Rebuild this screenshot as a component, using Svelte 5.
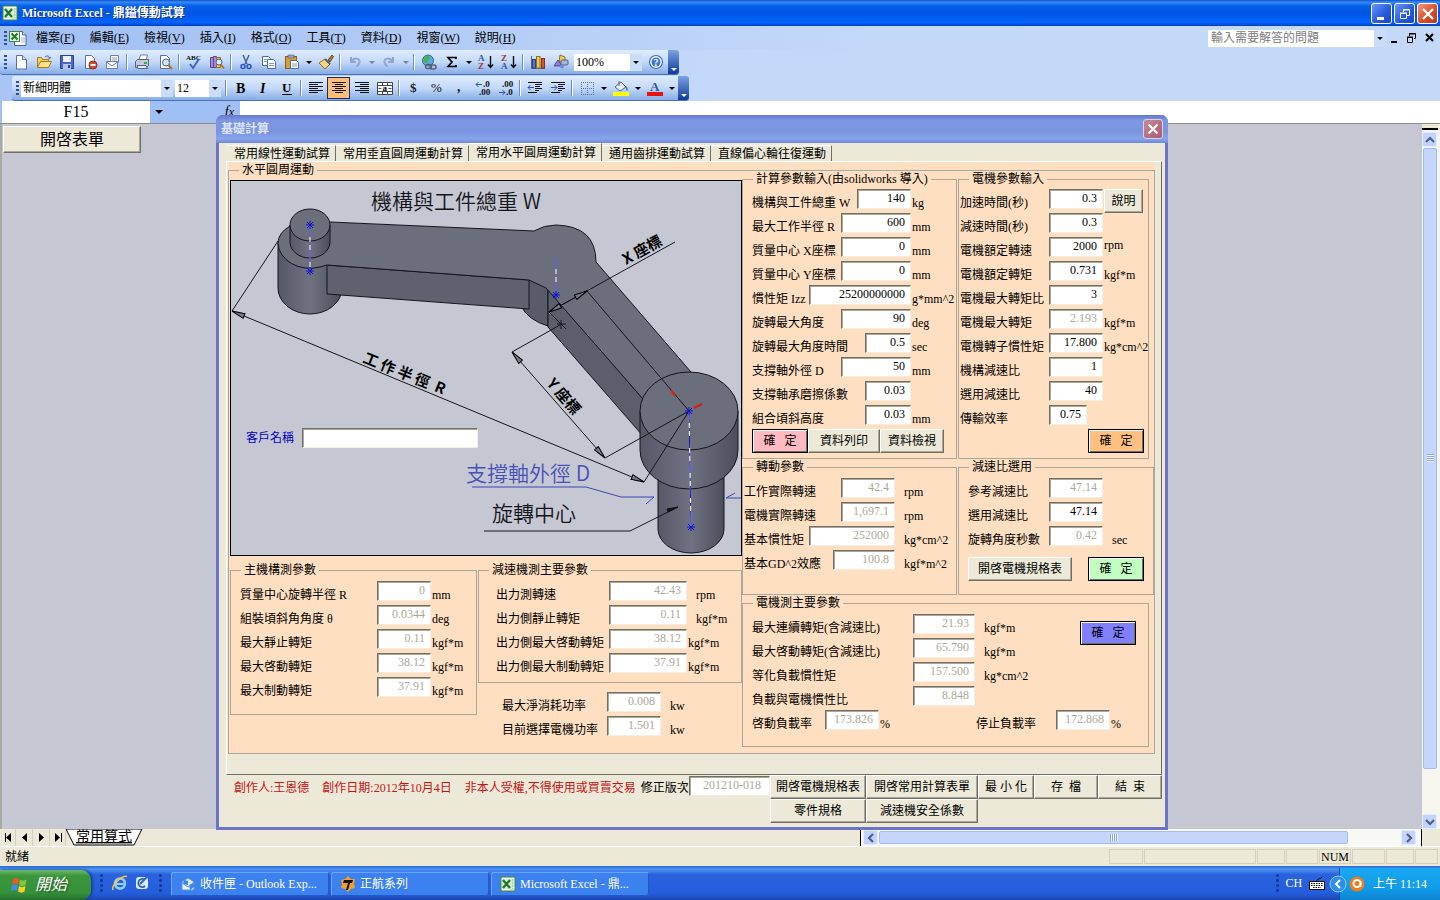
<script>
  const menus = [
    ['檔案', 'F'], ['編輯', 'E'], ['檢視', 'V'], ['插入', 'I'], ['格式', 'O'],
    ['工具', 'T'], ['資料', 'D'], ['視窗', 'W'], ['說明', 'H']
  ];
  const standardBar = [
    'new', 'open', 'save', 'perm', 'mail', '|', 'print', 'preview', '|', 'spell', 'research', '|',
    'cut', 'copy', 'paste', 'v', 'brush', '|', 'undo', 'v-', 'redo', 'v-', '|', 'link', 'sum', 'v',
    'az', 'za', '|', 'chart', 'draw'
  ];
  const formatBar = [
    '|', 'bold', 'italic', 'under', '|', 'left', 'center', 'right', 'merge', '|', 'dollar', 'percent',
    'comma', 'inc', 'dec', '|', 'outdent', 'indent', '|', 'border', 'v', 'fill', 'v', 'font', 'v'
  ];
  const tabs = ['常用線性運動試算', '常用垂直圓周運動計算', '常用水平圓周運動計算', '通用齒排運動試算', '直線偏心輪往復運動'];
  const load = [
    { l: '機構與工件總重 W', v: '140', w: 54, u: 'kg' },
    { l: '最大工作半徑 R', v: '600', w: 70, u: 'mm' },
    { l: '質量中心 X座標', v: '0', w: 70, u: 'mm' },
    { l: '質量中心 Y座標', v: '0', w: 70, u: 'mm' },
    { l: '慣性矩 Izz', v: '25200000000', w: 102, u: 'g*mm^2' },
    { l: '旋轉最大角度', v: '90', w: 70, u: 'deg' },
    { l: '旋轉最大角度時間', v: '0.5', w: 46, u: 'sec' },
    { l: '支撐軸外徑 D', v: '50', w: 70, u: 'mm' },
    { l: '支撐軸承磨擦係數', v: '0.03', w: 46, u: '' },
    { l: '組合頃斜高度', v: '0.03', w: 46, u: 'mm' }
  ];
  const motor = [
    { l: '加速時間(秒)', v: '0.3', w: 54, help: true },
    { l: '減速時間(秒)', v: '0.3', w: 54, u: '' },
    { l: '電機額定轉速', v: '2000', w: 54, u: 'rpm', high: true },
    { l: '電機額定轉矩', v: '0.731', w: 54, u: 'kgf*m' },
    { l: '電機最大轉矩比', v: '3', w: 54, u: '' },
    { l: '電機最大轉矩', v: '2.193', w: 54, u: 'kgf*m', off: true },
    { l: '電機轉子慣性矩', v: '17.800', w: 54, u: 'kg*cm^2' },
    { l: '機構減速比', v: '1', w: 54, u: '' },
    { l: '選用減速比', v: '40', w: 54, u: '' },
    { l: '傳輸效率', v: '0.75', w: 38, u: '' }
  ];
  const turning = [
    { l: '工作實際轉速', v: '42.4', w: 54, u: 'rpm', off: true },
    { l: '電機實際轉速', v: '1,697.1', w: 54, u: 'rpm', off: true },
    { l: '基本慣性矩', v: '252000', w: 86, u: 'kg*cm^2', off: true },
    { l: '基本GD^2效應', v: '100.8', w: 62, u: 'kgf*m^2', off: true }
  ];
  const ratio = [
    { l: '參考減速比', v: '47.14', w: 54, u: '', off: true },
    { l: '選用減速比', v: '47.14', w: 54, u: '' },
    { l: '旋轉角度秒數', v: '0.42', w: 54, u: 'sec', off: true }
  ];
  const motorOut = [
    { l: '最大連續轉矩(含減速比)', v: '21.93', w: 62, u: 'kgf*m', off: true },
    { l: '最大啓動轉矩(含減速比)', v: '65.790', w: 62, u: 'kgf*m', off: true },
    { l: '等化負載慣性矩', v: '157.500', w: 62, u: 'kg*cm^2', off: true },
    { l: '負載與電機慣性比', v: '8.848', w: 62, u: '', off: true }
  ];
  const body = [
    { l: '質量中心旋轉半徑 R', v: '0', w: 54, u: 'mm', off: true },
    { l: '組裝頃斜角角度 θ', v: '0.0344', w: 54, u: 'deg', off: true },
    { l: '最大靜止轉矩', v: '0.11', w: 54, u: 'kgf*m', off: true },
    { l: '最大啓動轉矩', v: '38.12', w: 54, u: 'kgf*m', off: true },
    { l: '最大制動轉矩', v: '37.91', w: 54, u: 'kgf*m', off: true }
  ];
  const reducer = [
    { l: '出力測轉速', v: '42.43', w: 78, u: 'rpm', off: true, wide: true },
    { l: '出力側靜止轉矩', v: '0.11', w: 78, u: 'kgf*m', off: true, wide: true },
    { l: '出力側最大啓動轉矩', v: '38.12', w: 78, u: 'kgf*m', off: true },
    { l: '出力側最大制動轉矩', v: '37.91', w: 78, u: 'kgf*m', off: true }
  ];
  const power = [
    { l: '最大淨消耗功率', v: '0.008', w: 54, u: 'kw', off: true },
    { l: '目前選擇電機功率', v: '1.501', w: 54, u: 'kw', off: true }
  ];
  const stars = [[310, 225], [310, 271], [556, 295], [689, 411], [691, 527]];
  const dims = ['M232 311L644 482', 'M512 352L605 458', 'M549 312L587 291'];
  const cells = [34, 112, 28, 32];
  const cellsEnd = [33, 28, 23];
</script>

{#snippet rows(list, key)}
  {#each list as r, i}
    <div class="row">
      <label for="{key}{i}">{r.l}</label>
      <input id="{key}{i}" class:off={r.off} readonly={r.off} value={r.v} style="width:{r.w}px" />
      {#if r.help}
        <span class="unit"><button class="btn help">說明</button></span>
      {:else}
        <span class="unit" class:high={r.high} class:wide={r.wide}>{r.u}</span>
      {/if}
    </div>
  {/each}
{/snippet}

{#snippet excel(size)}
  <svg width={size} height={size} viewBox="0 0 16 16" aria-hidden="true">
    <rect x="1" y="1" width="14" height="14" fill="#f4faf0" stroke="#3c8a3c" />
    <path d="M10 4h4M10 7h4M10 10h4M10 13h4M12 3v10" stroke="#9cc99c" />
    <rect x="2" y="3" width="10" height="10" fill="#dcefd6" />
    <path d="M3 4l7 8M10 4l-7 8" stroke="#1f7a2d" stroke-width="2.4" />
  </svg>
{/snippet}

{#snippet icon(n)}
  <svg width="16" height="16" viewBox="0 0 16 16" fill="none" aria-hidden="true">
    {#if n === 'new'}
      <path d="M3.5 1.5h6l4 4v9.500h-10z" fill="#fff" stroke="#5a6f9c" /><path d="M9.500 1.500v4h4" fill="#d5e0f5" stroke="#5a6f9c" />
    {:else if n === 'open'}
      <path d="M1.500 13.500v-10h4l1 2h6v2" fill="#f5cf62" stroke="#a87a1c" /><path d="M1.500 13.500l3-6h11l-3 6z" fill="#ffe38a" stroke="#a87a1c" /><path d="M9 3c2-2 4-1 4.500 1m-1.500-.5l1.500 1.500 1.500-2" stroke="#3d62b5" />
    {:else if n === 'save'}
      <path d="M1.500 1.500h13v13h-13z" fill="#4a68c8" stroke="#28409a" /><rect x="4" y="2" width="8" height="6" fill="#eef3ff" /><rect x="4" y="10" width="8" height="5" fill="#b7c2dc" /><rect x="9" y="11" width="2" height="3" fill="#28409a" />
    {:else if n === 'perm'}
      <path d="M3.500 1.500h6l3 3v10h-9z" fill="#fff" stroke="#5a6f9c" /><circle cx="11" cy="11" r="4" fill="#d8472f" stroke="#9c2a18" /><rect x="8.500" y="10" width="5" height="2" fill="#fff" />
    {:else if n === 'mail'}
      <path d="M5.500 1.500h8v7h-8z" fill="#fff" stroke="#6f7fa0" /><path d="M7 4h5M7 6h5" stroke="#8b98b4" /><path d="M1.500 7.500h11v7h-11z" fill="#f6f8ff" stroke="#6f7fa0" /><path d="M1.500 8l5.500 4 5.500-4" stroke="#6f7fa0" />
    {:else if n === 'print'}
      <path d="M5 6l1.500-5h7L12 6z" fill="#fff" stroke="#6f7fa0" /><path d="M1.500 7.500l2-2h11v6l-2 2h-11z" fill="#c3cbd9" stroke="#56627c" /><path d="M3 11.500h9l1.500 3H4z" fill="#e8edf5" stroke="#56627c" /><rect x="10" y="8" width="3" height="2" fill="#3aa845" />
    {:else if n === 'preview'}
      <path d="M3.500 1.500h6l3 3v10h-9z" fill="#fff" stroke="#5a6f9c" /><circle cx="9" cy="8.500" r="3.500" fill="#cfe6f7" stroke="#56627c" /><path d="M11.500 11l3.500 4" stroke="#b5782a" stroke-width="2" />
    {:else if n === 'spell'}
      <text x="0" y="6" font-size="7" font-weight="700" fill="#111">ABC</text><path d="M4 10l3 4 6-9" stroke="#3c68c8" stroke-width="2" />
    {:else if n === 'research'}
      <path d="M1.500 3.500h3v10h-3zM4.500 2.500h3v11h-3z" fill="#a88ad8" stroke="#5c4499" /><path d="M7.500 3.500h4v10h-4z" fill="#f1c659" stroke="#94701d" /><circle cx="10" cy="8" r="3" fill="#d9edf8" stroke="#56627c" /><path d="M12 10.500l3 4" stroke="#b5782a" stroke-width="2" />
    {:else if n === 'cut'}
      <path d="M5 1l4 9M11 1L7 10" stroke="#4a6199" stroke-width="1.500" /><circle cx="5" cy="12.500" r="2" stroke="#2c55b8" stroke-width="1.500" /><circle cx="11" cy="12.500" r="2" stroke="#2c55b8" stroke-width="1.500" />
    {:else if n === 'copy'}
      <path d="M1.500 2.500h6l2 2v7h-8z" fill="#fff" stroke="#4a6cb5" /><path d="M6.500 5.500h6l2 2v7h-8z" fill="#fff" stroke="#4a6cb5" /><path d="M8 9.500h5M8 11.500h5M3 5.500h3M3 7.500h3" stroke="#7f9ad2" />
    {:else if n === 'paste'}
      <rect x="1.500" y="2.500" width="11" height="12" fill="#d99b3e" stroke="#8c5d18" /><rect x="4" y="1" width="6" height="3" fill="#9aa3b5" stroke="#56627c" stroke-width=".6" /><path d="M6.500 6.500h6l2 2v6h-8z" fill="#fff" stroke="#4a6cb5" /><path d="M8 10h5M8 12h5" stroke="#7f9ad2" />
    {:else if n === 'brush'}
      <path d="M10 6l4-5 1.500 1.500L12 8z" fill="#a9793d" stroke="#6d4a1e" /><path d="M1 9l6-4 5 5-5 5z" fill="#f5d778" stroke="#94701d" /><path d="M7 5l5 5" stroke="#56627c" stroke-width="2" />
    {:else if n === 'undo'}
      <path d="M4 3v5h5M4.500 7.500c3-5 9-3 8 1-.4 2-2 3-3 4" stroke="#8fa6d0" stroke-width="2" />
    {:else if n === 'redo'}
      <path d="M12 3v5H7M11.500 7.500c-3-5-9-3-8 1 .4 2 2 3 3 4" stroke="#8fa6d0" stroke-width="2" />
    {:else if n === 'link'}
      <circle cx="7" cy="6.500" r="5.500" fill="#5aa8dd" stroke="#2c6aa0" /><path d="M3 4c2-3 5-2 6-1s-1 3-2 3 0 3-2 3-3-3-2-5z" fill="#4fb04a" /><rect x="4.500" y="10.500" width="6" height="4" rx="2" stroke="#56627c" stroke-width="1.500" /><rect x="9" y="11" width="6" height="4" rx="2" stroke="#56627c" stroke-width="1.500" />
    {:else if n === 'sum'}
      <path d="M12 5V3.500H4L8 8l-4 4.500h8V11" stroke="#000" stroke-width="1.700" />
    {:else if n === 'az' || n === 'za'}
      <text x="0" y="7" font-size="9" font-weight="700" fill={n === 'az' ? '#3457a8' : '#a83434'}>{n === 'az' ? 'A' : 'Z'}</text>
      <text x="0" y="15" font-size="9" font-weight="700" fill={n === 'az' ? '#a83434' : '#3457a8'}>{n === 'az' ? 'Z' : 'A'}</text>
      <path d="M12.500 2v11M10 10.500l2.500 3 2.500-3" stroke="#111" stroke-width="1.400" />
    {:else if n === 'chart'}
      <path d="M1.500 2v12.500H15" stroke="#56627c" /><rect x="2.500" y="5.500" width="3" height="8.500" fill="#4f7ad6" stroke="#28409a" /><rect x="6.500" y="2.500" width="3.500" height="11.500" fill="#f3c646" stroke="#94701d" /><rect x="11.500" y="4.500" width="3" height="9.500" fill="#d8562f" stroke="#8c2f18" />
    {:else if n === 'draw'}
      <path d="M7 1l5 2v5H6z" fill="#f3c95a" stroke="#94701d" /><path d="M1 12l4-6 4 6z" fill="#8f7fd6" stroke="#5c4499" /><rect x="8" y="6" width="7" height="5" rx="1" fill="#a7b6d6" stroke="#56627c" /><circle cx="9" cy="12.500" r="2" fill="#6f8fd6" />
    {:else if n === 'bold'}
      <text x="3" y="13" font-size="14" font-weight="700" fill="#000">B</text>
    {:else if n === 'italic'}
      <text x="4" y="13" font-size="14" font-weight="700" font-style="italic" fill="#000">I</text>
    {:else if n === 'under'}
      <text x="3" y="12" font-size="13" font-weight="700" fill="#000">U</text><path d="M3 14.500h10" stroke="#000" />
    {:else if n === 'left'}
      <path d="M1 2.500h14M1 4.500h9M1 6.500h14M1 8.500h9M1 10.500h14M1 12.500h9" stroke="#111" />
    {:else if n === 'center'}
      <path d="M1 2.500h14M4 4.500h8M1 6.500h14M4 8.500h8M1 10.500h14M4 12.500h8" stroke="#111" />
    {:else if n === 'right'}
      <path d="M1 2.500h14M6 4.500h9M1 6.500h14M6 8.500h9M1 10.500h14M6 12.500h9" stroke="#111" />
    {:else if n === 'merge'}
      <path d="M.5 2.500h15v12H.5zM.5 5.500h15M.5 11.500h15M5.500 2.500v3M10.500 2.500v3M5.500 11.500v3M10.500 11.500v3" stroke="#444" fill="#fff" /><text x="5.500" y="11" font-size="9" font-weight="700" fill="#000">a</text><path d="M1.500 8.500h3M11.500 8.500h3" stroke="#2c55b8" />
    {:else if n === 'dollar'}
      <text x="4" y="12" font-size="13" font-weight="700" fill="#222">$</text>
    {:else if n === 'percent'}
      <text x="2" y="12" font-size="13" fill="#111">%</text>
    {:else if n === 'comma'}
      <text x="5" y="11" font-size="14" font-weight="700" fill="#222">,</text>
    {:else if n === 'inc' || n === 'dec'}
      <text x={n === 'inc' ? 8 : 4} y="7" font-size="9" font-weight="700" fill="#111">{n === 'inc' ? '.0' : '.00'}</text>
      <text x={n === 'inc' ? 4 : 8} y="15" font-size="9" font-weight="700" fill="#111">{n === 'inc' ? '.00' : '.0'}</text>
      {#if n === 'inc'}<path d="M1 4.500h6M3.500 2L1 4.500 3.500 7" stroke="#2c55b8" />{:else}<path d="M1 12.500h6M4.500 10L7 12.500 4.500 15" stroke="#2c55b8" />{/if}
    {:else if n === 'outdent' || n === 'indent'}
      <path d="M1 2.500h14M8 4.500h7M8 6.500h5M8 8.500h7M8 10.500h4M1 12.500h9" stroke="#111" />
      {#if n === 'outdent'}<path d="M1 7.500h6M3.500 5L1 7.500 3.500 10" stroke="#2c55b8" />{:else}<path d="M1 7.500h6M4.500 5L7 7.500 4.500 10" stroke="#2c55b8" />{/if}
    {:else if n === 'border'}
      <path d="M2.500 2v12M8.500 2v12M14.500 2v12M2 2.500h13M2 8.500h13" stroke="#5b6f99" stroke-dasharray="1 1" /><path d="M2 14.500h13" stroke="#5b6f99" stroke-dasharray="1 1" />
    {:else if n === 'fill'}
      <path d="M2 7l6-5 5 5-6 4z" fill="#e8eefa" stroke="#56627c" /><path d="M6 1v5" stroke="#56627c" /><path d="M13 6c2 2 2 4 1 5-1-1-1-3-1-5z" fill="#3c68c8" /><rect x="0" y="12" width="16" height="4" fill="#ff0" />
    {:else if n === 'font'}
      <text x="3" y="11" font-size="13" font-weight="700" fill="#3457a8">A</text><rect x="0" y="12" width="16" height="4" fill="#e81010" />
    {:else if n === 'help'}
      <circle cx="8" cy="8" r="6.500" fill="#fff" stroke="#3c68c8" stroke-width="1.200" /><circle cx="8" cy="8" r="4.500" fill="#3c78d8" /><text x="5.500" y="12" font-size="10" font-weight="700" fill="#fff">?</text>
    {/if}
  </svg>
{/snippet}

{#snippet tools(list)}
  {#each list as t}
    {#if t === '|'}
      <span class="sep"></span>
    {:else if t[0] === 'v'}
      <button class="drop" class:dim={t === 'v-'} aria-label="▾"></button>
    {:else}
      <button class="tool" class:on={t === 'center'} aria-label={t}>{@render icon(t)}</button>
    {/if}
  {/each}
{/snippet}

{#snippet chevron(d)}
  <svg width="10" height="10" viewBox="0 0 10 10" fill="none" aria-hidden="true"><path {d} stroke="#4a6185" stroke-width="2.200" /></svg>
{/snippet}

<div class="desktop" lang="zh-Hant">
  <header class="title">
    {@render excel(16)}
    <h1>Microsoft Excel - 鼎鎰傳動試算</h1>
    <button class="cap" aria-label="最小化"><svg width="20" height="20" viewBox="0 0 20 20"><path d="M5 14.500h7" stroke="#fff" stroke-width="3" /></svg></button>
    <button class="cap" aria-label="還原"><svg width="20" height="20" viewBox="0 0 20 20" fill="none" stroke="#fff"><path d="M8.500 8V5.500h6v6H12M8 6h7" /><path d="M5.500 9.500h6v5h-6zM5 9h7" /></svg></button>
    <button class="cap close" aria-label="關閉"><svg width="20" height="20" viewBox="0 0 20 20"><path d="M5 5l10 10M15 5L5 15" stroke="#fff" stroke-width="2.200" /></svg></button>
  </header>

  <nav class="menubar">
    <span class="grip"></span>
    <svg class="book" width="18" height="16" viewBox="0 0 18 16" aria-hidden="true">
      <path d="M5.500 1.500h8l3.500 3.500v10.500H5.500z" fill="#fff" stroke="#4a6199" /><path d="M13.500 1.500V5H17" fill="#d5e0f5" stroke="#4a6199" /><path d="M12 8h4M12 10h4M12 12h4" stroke="#9db4dc" />
      <rect x=".5" y="1.500" width="10" height="10" fill="#e4f4de" stroke="#3c8a3c" /><path d="M2.500 3.500l6 6M8.500 3.500l-6 6" stroke="#1f7a2d" stroke-width="2" />
    </svg>
    {#each menus as [name, key]}
      <button class="menu">{name}(<u>{key}</u>)</button>
    {/each}
    <div class="ask"><input aria-label="輸入需要解答的問題" placeholder="輸入需要解答的問題" /><button class="arrow" aria-label="▾"></button></div>
    <svg class="mdi" width="46" height="12" viewBox="0 0 46 12" fill="none" stroke="#000"><path d="M1 10h6" stroke-width="2" /><path d="M19.500 4V1.500h6v5H24M19 2h7M17.500 5.500h5v5h-5zM17 5h6" /><path d="M36 2l7 7M43 2l-7 7" stroke-width="2" /></svg>
  </nav>

  <div class="bars">
    <div class="toolbar">
      <span class="grip"></span>
      {@render tools(standardBar)}
      <div class="combo zoom"><input aria-label="顯示比例" value="100%" /><button class="arrow" aria-label="▾"></button></div>
      <button class="tool" aria-label="help">{@render icon('help')}</button>
      <span class="end"></span>
    </div>
    <div class="toolbar second">
      <span class="grip"></span>
      <div class="combo face"><input aria-label="字型" value="新細明體" /><button class="arrow" aria-label="▾"></button></div>
      <div class="combo size"><input aria-label="字型大小" value="12" /><button class="arrow" aria-label="▾"></button></div>
      {@render tools(formatBar)}
      <span class="end"></span>
    </div>
  </div>

  <div class="formula">
    <input class="name" aria-label="名稱方塊" value="F15" />
    <button class="drop" aria-label="▾"></button>
    <span class="fx"><i>f</i>x</span>
    <input class="entry" aria-label="資料編輯列" />
  </div>

  <main class="sheet">
    <div class="grid"><button class="btn openform">開啓表單</button></div>
    <div class="vscroll">
      <span class="split"></span>
      <button class="sb" aria-label="上">{@render chevron('M1 7l4-4 4 4')}</button>
      <span class="vthumb"><i></i></span>
      <span class="vtrack"></span>
      <button class="sb" aria-label="下">{@render chevron('M1 3l4 4 4-4')}</button>
    </div>
  </main>

  <div class="sheettabs">
    <svg width="143" height="17" viewBox="0 0 143 17" aria-hidden="true">
      <path d="M5.500 4v9M61.500 4v9" stroke="#000" />
      <path d="M11 4v9L6 8.500zM27 4v9l-5-4.500zM39 4v9l5-4.500zM55 4v9l5-4.500z" />
      <path d="M66 0l8 16h60l8-16z" fill="#fff" stroke="#000" /><path d="M15.500 0v17M32.500 0v17M49.500 0v17M65.500 0v17" stroke="#d5d1be" />
      <text x="76" y="12" font-size="14" text-decoration="underline">常用算式</text>
    </svg>
    <div class="hscroll">
      <button class="sb" aria-label="左">{@render chevron('M7 1L3 5l4 4')}</button>
      <span class="hthumb"><i></i></span>
      <span class="htrack"></span>
      <button class="sb" aria-label="右">{@render chevron('M3 1l4 4-4 4')}</button>
    </div>
    <span class="corner"></span>
  </div>

  <div class="status">
    <span class="ready">就緒</span>
    {#each cells as w}<span class="cell" style="width:{w}px"></span>{/each}
    <span class="cell num">NUM</span>
    {#each cellsEnd as w}<span class="cell" style="width:{w}px"></span>{/each}
  </div>

  <footer class="taskbar">
    <button class="start">
      <svg width="18" height="18" viewBox="0 0 18 18" aria-hidden="true"><path d="M2 3c2-1.500 4-1.500 6 0L7 8.500c-2-1.500-4-1.500-6 0z" fill="#f0562b" /><path d="M9 3.500c2 1.500 4 1.500 6.500 0L14.500 9c-2 1.500-4 1.500-6.500 0z" fill="#86c440" /><path d="M1 9.500c2-1.500 4-1.500 6 0L6 15c-2-1.500-4-1.500-6 0z" fill="#3f8cf0" /><path d="M8 10c2 1.500 4 1.500 6.500 0l-1 5.500c-2 1.500-4 1.500-6.500 0z" fill="#fbd022" /></svg>
      開始
    </button>
    <span class="dots"></span>
    <svg width="16" height="18" viewBox="0 0 16 18" fill="none" aria-hidden="true"><circle cx="8" cy="9.500" r="5" stroke="#8fd0ff" stroke-width="2.600" /><path d="M4 10h9" stroke="#8fd0ff" stroke-width="2" /><path d="M1 16C-1 12 10 1 15 2.500" stroke="#f8c23a" stroke-width="1.600" /></svg>
    <svg width="16" height="18" viewBox="0 0 16 18" fill="none" aria-hidden="true"><rect x="2" y="3" width="12" height="12" rx="3" fill="#d6ecff" /><path d="M11 6a4 4 0 1 0 0 6M6 10l7-7" stroke="#2c64b8" stroke-width="1.800" /></svg>
    <span class="dots"></span>
    <button class="task"><svg width="16" height="16" viewBox="0 0 16 16" aria-hidden="true"><path d="M2 6l6-4 6 4v8H2z" fill="#e5f1ff" stroke="#5f93d8" /><path d="M4 4l4 1v4L3 8zM9 9l5-3v5l-4 3z" fill="#3c86dc" /><path d="M2 7l6 4 6-4" fill="none" stroke="#5f93d8" /></svg>收件匣 - Outlook Exp...</button>
    <button class="task"><svg width="16" height="16" viewBox="0 0 16 16" aria-hidden="true"><path d="M8 0l3 3h4l-1 5 1 4-4 1-3 3-3-3-4-1 1-4-1-4 4-1z" fill="#f0a02c" /><path d="M4 4h9l-1 3h-2l-2 7H6l2-7H3z" fill="#17120a" /></svg>正航系列</button>
    <button class="task">{@render excel(16)}Microsoft Excel - 鼎...</button>
    <span class="fill"></span>
    <span class="dots"></span>
    <span class="lang">CH</span>
    <svg class="kbd" width="16" height="14" viewBox="0 0 16 14" aria-hidden="true"><path d="M8 5c0-3 3-1 5-4" stroke="#111" fill="none" /><rect x=".5" y="5.500" width="15" height="8" fill="#fff" stroke="#111" /><path d="M2 7.500h12M2 9.500h12M4 11.500h8" stroke="#111" stroke-dasharray="1.500 1" /></svg>
    <div class="tray">
      <svg class="hide" width="18" height="18" viewBox="0 0 18 18" fill="none" aria-hidden="true"><circle cx="9" cy="9" r="8" fill="#2d8fec" stroke="#8fcbff" /><path d="M11 5L7 9l4 4" stroke="#fff" stroke-width="2" /></svg>
      <svg width="16" height="16" viewBox="0 0 16 16" fill="none" aria-hidden="true"><circle cx="8" cy="8" r="7.500" fill="#f07c1c" /><circle cx="8" cy="7.500" r="3.500" stroke="#fff" stroke-width="2" /><path d="M11.500 5v6" stroke="#fff" stroke-width="1.800" /></svg>
      <time>上午 11:14</time>
    </div>
  </footer>

  <section class="dialog">
    <header class="dtitle">
      <h2>基礎計算</h2>
      <button class="cap close" aria-label="關閉"><svg width="18" height="18" viewBox="0 0 20 20"><path d="M5 5l10 10M15 5L5 15" stroke="#fff" stroke-width="2.200" /></svg></button>
    </header>
    <div class="dbody">
      <div class="tabs" role="tablist">
        {#each tabs as t, i}<button role="tab" aria-selected={i === 2} class:active={i === 2}>{t}</button>{/each}
      </div>
      <div class="page">
        <div class="peach">
          <fieldset class="outer">
            <legend>水平圓周運動</legend>
            <div class="cols">
              <div class="leftcol">
                <div class="picture">
                  <svg viewBox="231 181 510 374" fill="none" stroke="#14151c" stroke-width="1">
                    <defs>
                      <linearGradient id="cyl" x1="0" x2="1"><stop offset="0" stop-color="#555866" /><stop offset=".5" stop-color="#6f7280" /><stop offset="1" stop-color="#4b4e5b" /></linearGradient>
                      <marker id="tip" viewBox="0 0 14 6" refX="14" refY="3" markerWidth="16" markerHeight="6" orient="auto-start-reverse" markerUnits="userSpaceOnUse"><path d="M14 3L1 .5v5z" fill="#777a86" stroke="#000" /></marker>
                    </defs>
                    <path d="M658 470V529a33 24 0 0 0 66 0V470z" fill="url(#cyl)" />
                    <path d="M278 243V288a32 26 0 0 0 64 0V243z" fill="url(#cyl)" />
                    <path d="M521 306Q528 320 548 326V286l-19-7z" fill="#585b68" />
                    <path d="M327 265L529 280V309L327 294z" fill="#5f626e" />
                    <path d="M548 288L643 399V436L548 327z" fill="#5b5e6b" />
                    <path d="M290 226Q278 233 278 243A32 26 0 0 0 320 267L327 265 529 280 546 288 643 399 691 372 596 262Q596 226 556 225 544 225 534 231L330 222z" fill="#6b6e7b" stroke="none" />
                    <path d="M290 226Q278 233 278 243A32 26 0 0 0 320 267L327 265 529 280 546 288 643 399M691 372L596 262Q596 226 556 225 544 225 534 231L330 222" />
                    <path d="M640 411V450a49 39 0 0 0 98 0V411z" fill="url(#cyl)" />
                    <ellipse cx="689" cy="411" rx="49" ry="39" fill="#6b6e7b" />
                    <path d="M290 225V242a20 16 0 0 0 40 0V225z" fill="url(#cyl)" />
                    <ellipse cx="310" cy="225" rx="20" ry="16" fill="#6b6e7b" />
                    <path d="M587 291L689 411M549 312l12 12M557 324h9M561 320v9M557 320l9 9M278 241L232 311M644 482L689 411 605 458M512 352L560 325M549 312L675 242" />
                    {#each dims as d}
                      <path {d} marker-start="url(#tip)" marker-end="url(#tip)" />
                    {/each}
                    <path d="M310 225V271M556 257V295M689 411L691 527" stroke="#fff" />
                    <path d="M310 225V271M556 257V295M689 411L691 527" stroke="#1414c8" stroke-dasharray="12 5 3 5" />
                    {#each stars as [x, y]}
                      <path d="M{x - 4} {y}h8M{x} {y - 4}v8M{x - 3} {y - 3}l6 6M{x + 3} {y - 3}l-6 6" stroke="#1010d8" />
                    {/each}
                    <path d="M671 390l4 6M694 408l8-4" stroke="#e01818" stroke-width="2" />
                    <path d="M472 487H586L621 497H654L646 504M742 498H726L735 493" stroke="#3d46b4" />
                    <path d="M484 531H630L678 507" /><path d="M678 507l-11 2 1 3z" fill="#111" />
                    <g stroke="none" fill="#15161c" class="light">
                      <text x="371" y="209">機構與工件總重 W</text>
                      <text x="466" y="481" fill="#4850b8">支撐軸外徑 D</text>
                      <text x="492" y="521">旋轉中心</text>
                    </g>
                    <g stroke="none" fill="#000" class="heavy">
                      <text transform="translate(626 265) rotate(-29)">X 座標</text>
                      <text transform="translate(362 362) rotate(22)">工 作 半 徑 &#160;R</text>
                      <text transform="translate(546 384) rotate(49)">Y 座標</text>
                    </g>
                  </svg>
                  <div class="client"><label for="client">客戶名稱</label><input id="client" /></div>
                </div>
                <div class="under">
                  <fieldset class="fa"><legend>主機構測參數</legend>{@render rows(body, 'body')}</fieldset>
                  <div>
                    <fieldset class="fb"><legend>減速機測主要參數</legend>{@render rows(reducer, 'red')}</fieldset>
                    <div class="power">{@render rows(power, 'pow')}</div>
                  </div>
                </div>
              </div>
              <div class="rightcol">
                <fieldset class="fc">
                  <legend>計算參數輸入(由solidworks 導入)</legend>
                  {@render rows(load, 'load')}
                  <div class="buttons"><button class="btn ok pink">確&#160;&#160; 定</button><button class="btn b72">資料列印</button><button class="btn b64">資料檢視</button></div>
                </fieldset>
                <fieldset class="fd">
                  <legend>電機參數輸入</legend>
                  {@render rows(motor, 'mot')}
                  <div class="buttons end-align"><button class="btn ok orange">確&#160;&#160; 定</button></div>
                </fieldset>
                <fieldset class="fe"><legend>轉動參數</legend>{@render rows(turning, 'turn')}</fieldset>
                <fieldset class="ff">
                  <legend>減速比選用</legend>
                  {@render rows(ratio, 'ratio')}
                  <div class="buttons spread"><button class="btn b104">開啓電機規格表</button><button class="btn ok green">確&#160;&#160; 定</button></div>
                </fieldset>
                <fieldset class="fg">
                  <legend>電機測主要參數</legend>
                  <div class="gtop">
                    <div>{@render rows(motorOut, 'out')}</div>
                    <button class="btn ok blue">確&#160;&#160; 定</button>
                  </div>
                  <div class="gbottom">
                    <div class="row"><label for="s1">啓動負載率</label><input id="s1" class="off" readonly value="173.826" /><span class="unit">%</span></div>
                    <div class="row"><label for="s2">停止負載率</label><input id="s2" class="off" readonly value="172.868" /><span class="unit">%</span></div>
                  </div>
                </fieldset>
              </div>
            </div>
          </fieldset>
        </div>
      </div>
      <div class="dfoot">
        <div class="credits">
          <span class="red">創作人:王恩德</span><span class="red">創作日期:2012年10月4日</span><span class="red last">非本人受權,不得使用或買賣交易</span>
          <label for="rev">修正版次</label><input id="rev" class="off" readonly value="201210-018" />
        </div>
        <div class="actions">
          <button class="btn">開啓電機規格表</button><button class="btn">開啓常用計算表單</button><button class="btn">最 小 化</button><button class="btn">存&#160; 檔</button><button class="btn">結&#160; 束</button>
          <button class="btn">零件規格</button><button class="btn">減速機安全係數</button>
        </div>
      </div>
    </div>
  </section>
</div>

<style>
  :global(body) { margin: 0; }
  .desktop {
    position: relative; display: flex; flex-direction: column; min-height: 100vh; overflow: hidden;
    font: 12px/16px "Liberation Serif", "Noto Sans CJK TC", serif; color: #000; background: #c3d7f7;
  }
  .desktop * { box-sizing: border-box; }
  button, input { font: inherit; color: inherit; margin: 0; padding: 0; border: 0; background: none; border-radius: 0; white-space: nowrap; }
  input { min-width: 0; outline: 0; }
  svg { display: block; flex: none; }
  h1, h2 { margin: 0; font-size: 12px; line-height: 16px; color: #fff; flex: 1; }

  .title { display: flex; align-items: center; gap: 2px; height: 26px; padding: 0 2px; background: linear-gradient(#0c50c8 0, #3a8cf8 8%, #0660ea 22%, #0054e3 50%, #0264ff 86%, #0040c0 100%); }
  .title h1 { padding-left: 2px; text-shadow: 1px 1px #0a2f88; }
  .cap { width: 21px; height: 21px; border: 1px solid #fff; border-radius: 3px; background: linear-gradient(135deg, #6d96f2, #2458dc 60%, #1b48c4); }
  .cap.close { background: linear-gradient(135deg, #f09a7c, #d8502c 55%, #b8381c); }

  .menubar { display: flex; align-items: center; height: 24px; padding: 0 4px; background: linear-gradient(90deg, #a0bff5, #c4d8f8 60%); }
  .grip { width: 3px; height: 14px; margin: 0 2px 0 0; background: repeating-linear-gradient(#33508f 0 2px, transparent 2px 4px); }
  .book { margin-right: 9px; }
  .menu { margin-right: 15px; }
  .ask { display: flex; margin-left: auto; width: 178px; height: 17px; background: #fff; }
  .ask input { flex: 1; padding-left: 3px; }
  .ask input::placeholder { color: #7d7d7d; opacity: 1; }
  .mdi { margin-left: 4px; }
  .arrow { width: 12px; background: #c9dcf8; }
  .arrow::before, .drop::before { content: ""; display: block; width: 0; margin: 0 auto; border: 3px solid transparent; border-top-color: #000; border-bottom: 0; }

  .bars { display: flex; flex-direction: column; align-items: flex-start; gap: 2px; padding-bottom: 1px; background: linear-gradient(90deg, #a9c5f6, #c4d8f8 50%); }
  .toolbar { display: flex; align-items: center; height: 24px; padding-left: 4px; border-radius: 3px; background: linear-gradient(#dfecfe, #c3d9f9 50%, #86ace6); box-shadow: 0 1px #4c72b4; }
  .toolbar.second { margin-left: 12px; }
  .tool { display: grid; place-items: center; width: 23px; height: 22px; }
  .tool svg { overflow: visible; }
  .tool.on { background: #ffbd75; border: 1px solid #1a2a6c; }
  .sep { width: 1px; height: 16px; margin: 0 3px 0 2px; background: #6a8ccb; box-shadow: 1px 0 #fff; }
  .drop { width: 11px; height: 20px; }
  .drop.dim { opacity: .4; }
  .combo { display: flex; height: 17px; margin-right: 2px; background: #fff; }
  .combo input { flex: 1; width: 0; padding-left: 2px; }
  .combo.zoom { width: 68px; margin-left: 2px; }
  .combo.face { width: 152px; }
  .combo.size { width: 46px; }
  .end { position: relative; width: 11px; height: 24px; margin-left: 1px; border-radius: 0 3px 3px 0; background: linear-gradient(#7ba2e4, #0c3c94); }
  .end::after { content: ""; position: absolute; right: 2px; bottom: 3px; border: 3px solid transparent; border-top-color: #fff; border-bottom: 0; }

  .formula { display: flex; align-items: center; height: 23px; padding-left: 2px; background: #a0bff5; border-bottom: 1px solid #8c8c88; }
  .name { width: 148px; height: 22px; text-align: center; background: #fff; font-size: 16px; }
  .formula .drop { width: 18px; }
  .formula .drop::before { border-width: 4px 4px 0; }
  .fx { width: 72px; padding-right: 6px; text-align: right; font-size: 12px; font-style: italic; }
  .fx i { font-size: 14px; }
  .entry { flex: 1; height: 22px; background: #fff; }

  .sheet { flex: 1; display: flex; min-height: 700px; border-left: 2px solid #a9aaa6; background: #c5c8d2; }
  .grid { flex: 1; padding: 2px 1px; }
  .btn { height: 24px; text-align: center; background: #ece9d8; border: 1px solid; border-color: #fff #716f64 #716f64 #fff; box-shadow: inset -1px -1px #aca899; }
  .openform { width: 138px; height: 27px; font-size: 16px; }
  .vscroll { display: flex; flex-direction: column; width: 18px; padding-right: 2px; background: #f6f5ee; }
  .split { height: 6px; margin-bottom: 2px; background: #ece9d8; border-bottom: 2px solid #000; }
  .sb { display: grid; place-items: center; flex: none; width: 15px; height: 15px; background: #c3d3fd; border: 1px solid #e3ebff; border-radius: 2px; }
  .vthumb, .hthumb { display: grid; place-items: center; margin: 1px; background: #c5d5fc; border: 1px solid #a5bbee; border-radius: 2px; }
  .vthumb { flex: 14; }
  .vtrack { flex: 1; }
  .vthumb i { width: 7px; height: 8px; background: repeating-linear-gradient(#8fa9e6 0 1px, #eef4ff 1px 2px); }

  .sheettabs { display: flex; height: 18px; background: #ece9d8; border-bottom: 1px solid #fff; }
  .hscroll { display: flex; width: 39%; margin-left: auto; padding: 1px 5px 1px 2px; background: #f8f8f4; border-left: 1px solid #000; border-right: 1px solid #000; }
  .hthumb { flex: 9; }
  .htrack { flex: 1; }
  .hthumb i { width: 8px; height: 7px; background: repeating-linear-gradient(90deg, #8fa9e6 0 1px, #eef4ff 1px 2px); }
  .corner { width: 18px; }
  .status { display: flex; align-items: center; gap: 1px; height: 19px; padding: 0 2px 0 5px; background: #ece9d8; }
  .ready { flex: 1; }
  .cell { height: 15px; border: 1px solid #d4d0bf; }
  .num { padding: 0 1px; line-height: 14px; }

  .taskbar { display: flex; align-items: center; height: 34px; color: #fff; background: linear-gradient(#2a6ad4 0, #4c92f0 10%, #2a62de 25%, #245edc 80%, #1c46ae 100%); }
  .start { display: flex; align-items: center; gap: 6px; align-self: flex-end; width: 91px; height: 30px; padding-left: 11px; border-radius: 0 10px 10px 0; background: linear-gradient(#6fb86c, #3a963a 20%, #36923a 75%, #23702a); font-size: 16px; font-style: italic; text-shadow: 1px 1px 2px #1c4a1c; box-shadow: 2px 0 3px #1c3f9c; }
  .dots { width: 5px; height: 20px; margin: 0 8px; background: radial-gradient(circle, #123a98 1px, transparent 2px) 0 0 / 5px 5px; }
  .dots + svg { margin-right: 6px; }
  .task { display: flex; align-items: center; gap: 4px; width: 158px; height: 24px; margin: 2px 2px 0 0; padding-left: 9px; border-radius: 2px; background: #3c81f0; box-shadow: inset 1px 1px #6aa4fa, inset -1px -1px #2458c8; }
  .fill { flex: 1; }
  .lang { margin-right: 7px; }
  .dots:has(+ .lang) { margin-right: 5px; }
  .tray { display: flex; align-items: center; gap: 2px; height: 32px; margin: 2px 0 0 14px; padding-right: 13px; background: linear-gradient(#18a8f0, #119cea 60%, #0d84d0); box-shadow: inset 1px 0 #0c4c9c; }
  .hide { margin-left: -10px; }
  .tray time { margin-left: 6px; }

  .dialog { position: absolute; left: 15%; top: 115px; width: max(952px, 66%); border: 3px solid #6d74c8; border-top: 0; border-radius: 7px 7px 0 0; background: #6d74c8; }
  .dtitle { display: flex; align-items: center; height: 28px; margin: 0 -3px; padding: 0 5px; border-radius: 7px 7px 0 0; background: linear-gradient(#6878cc, #7c98e4 20%, #7b94e0 60%, #88a4ea 85%, #7088d4); }
  .dtitle h2 { color: #dce4fa; }
  .dtitle .close { width: 20px; height: 20px; border-color: #d4d4f0; background: linear-gradient(135deg, #c48c98, #b0586c); }
  .dbody { padding: 0 3px 4px 7px; background: #ece9d8; }
  .tabs { display: flex; align-items: flex-end; height: 18px; padding-left: 1px; }
  .tabs button { height: 16px; padding: 0 5px 0 7px; border-top: 1px solid #fff; border-right: 1px solid #716f64; }
  .tabs .active { height: 18px; line-height: 14px; }
  .page { padding: 0 6px 20px 1px; border: 1px solid; border-color: #fff #716f64 #716f64 #fff; }
  .peach { padding-top: 1px; background: #ffdfc1; }

  fieldset { --indent: 0px; min-width: 0; margin: 0; padding: 4px 0 0 var(--indent); border: 1px solid #aca899; }
  legend { height: 14px; margin-left: calc(10px - var(--indent)); padding: 0 3px; line-height: 14px; }
  .outer { padding: 0 0 6px; }
  .cols { display: grid; grid-template-columns: 513px 1fr; }
  .leftcol { padding: 3px 0 0 1px; }
  .picture { position: relative; border: 1px solid #000; background: #c5c8d2; }
  .picture svg { width: 100%; }
  .light { font-family: "Noto Sans CJK TC", sans-serif; font-size: 21px; font-weight: 350; }
  .heavy { font-family: "Noto Sans CJK TC", sans-serif; font-size: 15px; font-weight: 700; }
  .client { position: absolute; left: 15px; top: 247px; display: flex; gap: 8px; align-items: center; color: #0000c8; }
  .client input { width: 176px; }

  .row { display: flex; align-items: flex-start; height: 24px; white-space: nowrap; }
  .row label { flex: 1; width: 0; padding-top: 6px; }
  .row .unit { flex: none; padding: 6px 0 0 1px; }
  .row .unit.high { padding-top: 0; }
  .row input, .client input, #rev { flex: none; height: 20px; padding: 0 5px 2px 2px; text-align: right; color: #000; background: #fff; border: 1px solid; border-color: #716f64 #f1efe2 #f1efe2 #716f64; box-shadow: inset 1px 1px #aca899; }
  .row input.off, #rev.off { color: #aca899; }

  .under { display: grid; grid-template-columns: 247px 1fr; gap: 1px; margin-top: 7px; align-items: start; }
  .fa { --indent: 9px; padding-bottom: 13px; }
  .fa .unit { width: 45px; }
  .fb { --indent: 17px; padding-bottom: 5px; }
  .fb .unit { width: 54px; }
  .fb .unit.wide { padding-left: 9px; }
  .power { padding: 9px 0 0 24px; }
  .power .unit { width: 81px; padding-left: 9px; }

  .rightcol { display: grid; grid-template-columns: 215px 1fr; gap: 1px; align-content: start; margin-top: -5px; }
  .fc { --indent: 9px; padding-top: 3px; padding-bottom: 5px; }
  .fc .unit { width: 45px; }
  .fd { --indent: 1px; margin-right: 5px; padding-top: 3px; padding-bottom: 5px; }
  .fd .row label, .ff .row label { flex: none; width: 89px; }
  .fd .unit { flex: 1; }
  .help { width: 39px; }
  .row .unit:has(.help) { padding-top: 0; }
  .fe { --indent: 1px; padding-bottom: 20px; }
  .fe .unit { width: 61px; padding-left: 9px; }
  .ff { --indent: 9px; }
  .ff .row label { width: 81px; }
  .ff .unit { padding-left: 9px; }
  .fg { --indent: 9px; grid-column: 1 / 3; margin-right: 5px; padding-bottom: 12px; }
  .gtop { display: flex; justify-content: space-between; padding-right: 12px; }
  .gtop .row label { flex: none; width: 161px; }
  .gtop .unit { padding-left: 9px; }
  .gtop .btn { margin-top: 7px; }
  .gbottom { display: grid; grid-template-columns: 224px 1fr; }
  .gbottom label { flex: none; width: 73px; }
  .gbottom .row + .row label { width: 80px; }
  .gbottom input { width: 54px; }

  .buttons { display: flex; }
  .end-align { justify-content: flex-end; padding-right: 4px; }
  .spread { justify-content: space-between; padding: 7px 9px 0 0; }
  .ok { width: 56px; border-color: #000; box-shadow: inset 1px 1px #fff, inset -1px -1px #716f64; }
  .pink { background: #ffb9c0; }
  .orange { background: #ffc080; }
  .green { background: #c0ffc0; }
  .blue { background: #8080ff; }
  .b72 { width: 72px; }
  .b64 { width: 64px; }
  .b104 { width: 104px; }

  .dfoot { display: grid; grid-template-columns: minmax(0, 1fr) 392px; margin-right: 3px; }
  .credits { display: flex; align-items: flex-start; padding: 1px 0 0 8px; line-height: 24px; white-space: nowrap; }
  .page { margin-right: 3px; }
  .dbody { padding-right: 0; }
  .red { margin-right: 13px; color: #c81414; }
  .red.last { margin-right: 5px; }
  #rev { flex: 1; width: 0; padding-right: 8px; }
  .actions { display: grid; grid-template-columns: 96px 112px 56px 64px 64px; }
</style>
